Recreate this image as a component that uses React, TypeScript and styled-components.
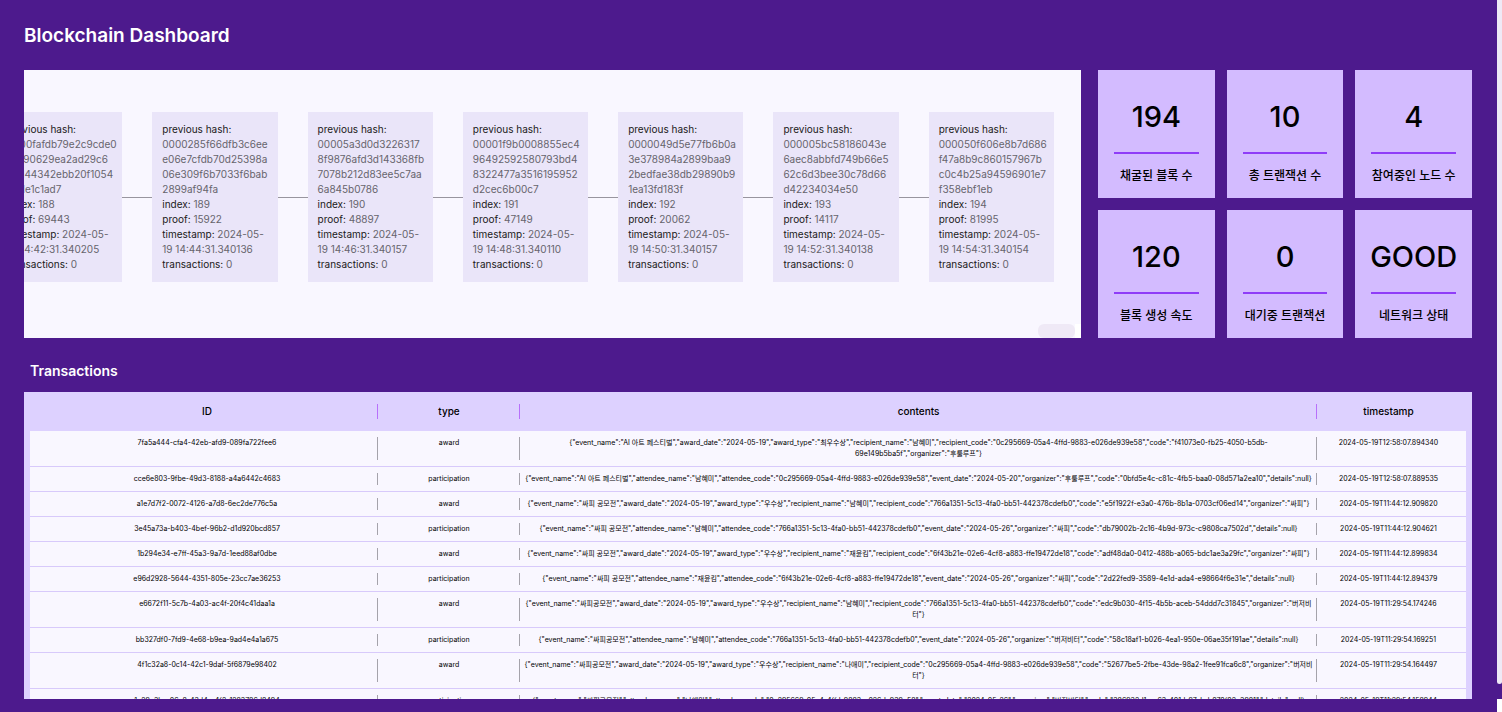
import React from "react";
import styled, { createGlobalStyle } from "styled-components";

const color = {
  page: "#4d1a8d",
  panel: "#f9f7ff",
  block: "#eae5f9",
  stat: "#d3bbff",
  accent: "#8f3cf8",
  head: "#ddd1ff",
  headLine: "#b870fb",
  rowLine: "#d8cafb",
  cellLine: "#a5a3ab",
  thumb: "#efe9f6",
};

const GlobalStyle = createGlobalStyle`
  *, *::before, *::after { box-sizing: border-box; }
  body {
    margin: 0;
    background: ${color.page};
    font-family: Inter, "Noto Sans CJK KR", sans-serif;
    color: #000;
  }
  h1, h2, p, dl, dt, dd { margin: 0; }
`;

const Page = styled.div`
  display: flex;
  height: 100vh;
  overflow: hidden;
`;

const Main = styled.main`
  flex: 1;
  min-width: 0;
  display: flex;
  flex-direction: column;
  padding: 20px 25px 13px 24px;
`;

const ScrollRail = styled.div`
  width: 5px;
  display: flex;
  flex-direction: column;
  justify-content: space-between;
`;

const RailThumb = styled.div`
  height: 96%;
  background: ${color.thumb};
  border-radius: 0 0 3px 3px;
`;

const RailEnd = styled.div`
  height: 13px;
  background: #fff;
`;

const Title = styled.h1`
  font-size: 19px;
  line-height: 32px;
  font-weight: 600;
  color: #fff;
`;

const Overview = styled.section`
  display: flex;
  gap: 17px;
  height: 268px;
  flex-shrink: 0;
  margin-top: 18px;
`;

const ChainPanel = styled.div`
  flex: 1;
  min-width: 0;
  display: flex;
  flex-direction: column;
  justify-content: space-between;
  overflow: hidden;
  background: ${color.panel};
`;

const Chain = styled.div`
  display: flex;
  justify-content: flex-end;
  align-items: center;
  padding: 42px 27px 0 0;
`;

const ChainTrack = styled.div`
  flex: 0 0 calc(100% + 27px);
  min-width: 0;
  display: flex;
  align-items: center;
`;

const Block = styled.dl`
  flex: 1 1 0;
  min-width: 0;
  padding: 10px;
  background: ${color.block};
  font-size: 10px;
  line-height: 15px;
  white-space: nowrap;
`;

const Field = styled.div``;

const Name = styled.dt`
  display: inline;
  color: #1b1a20;
`;

const Value = styled.dd`
  display: inline;
  color: #66646c;
  white-space: pre;
`;

const Link = styled.div`
  flex: 0 0 30px;
  height: 1px;
  background: #98959f;
`;

const ChainScroll = styled.div`
  display: flex;
  justify-content: flex-end;
  height: 14px;
`;

const ChainThumb = styled.div`
  width: 37px;
  background: ${color.thumb};
  border-radius: 6px;
`;

const ChainCorner = styled.div`
  width: 6px;
  background: #fff;
`;

const Stats = styled.div`
  flex: 0 0 374px;
  display: grid;
  grid-template-columns: repeat(3, minmax(0, 1fr));
  grid-template-rows: repeat(2, minmax(0, 1fr));
  gap: 12px;
`;

const Stat = styled.div`
  display: flex;
  flex-direction: column;
  align-items: center;
  padding: 12px 16px;
  background: ${color.stat};
`;

const StatValue = styled.p`
  width: 100%;
  height: 72px;
  display: flex;
  justify-content: center;
  font-size: 29px;
  line-height: 70px;
  font-weight: 500;
  border-bottom: 2px solid ${color.accent};
`;

const StatLabel = styled.p`
  font-size: 12px;
  line-height: 18px;
  font-weight: 500;
  margin-top: 13px;
  white-space: nowrap;
`;

const SubTitle = styled.h2`
  margin: 20px 0 8px 6px;
  font-size: 14px;
  line-height: 26px;
  font-weight: 600;
  color: #fff;
`;

const TablePanel = styled.section`
  flex: 1;
  min-height: 0;
  overflow: hidden;
  padding: 0 6px;
  background: ${color.head};
`;

const Table = styled.table`
  width: 100%;
  table-layout: fixed;
  border-collapse: separate;
  border-spacing: 0;
`;

const Col = styled.col<{ $width?: number }>`
  width: ${(p) => (p.$width ? `${p.$width}px` : "auto")};
`;

const divider = (tone: string, inset: number) => `
  &:not(:last-child) {
    background-image: linear-gradient(${tone}, ${tone});
    background-repeat: no-repeat;
    background-position: right center;
    background-size: 1px calc(100% - ${inset}px);
  }
  &:first-child { padding-left: 6px; }
  &:last-child { padding-right: 6px; }
`;

const Th = styled.th`
  height: 39px;
  padding: 0;
  font-size: 10px;
  line-height: 15px;
  font-weight: 500;
  ${divider(color.headLine, 24)}
`;

const Td = styled.td`
  padding: 6px 0 7px;
  background-color: ${color.panel};
  border-bottom: 1px solid ${color.rowLine};
  font-size: 7px;
  line-height: 11px;
  text-align: center;
  vertical-align: top;
  white-space: pre;
  ${divider(color.cellLine, 12)}
`;

type BlockData = {
  hash: string[];
  index: number;
  proof: number;
  time: string;
};

const blocks: BlockData[] = [
  { hash: ["0000fafdb79e2c9cde0", "3d190629ea2ad29c6", "b7d44342ebb20f1054", "a6de1c1ad7"], index: 188, proof: 69443, time: "14:42:31.340205" },
  { hash: ["0000285f66dfb3c6ee", "e06e7cfdb70d25398a", "06e309f6b7033f6bab", "2899af94fa"], index: 189, proof: 15922, time: "14:44:31.340136" },
  { hash: ["00005a3d0d3226317", "8f9876afd3d143368fb", "7078b212d83ee5c7aa", "6a845b0786"], index: 190, proof: 48897, time: "14:46:31.340157" },
  { hash: ["00001f9b0008855ec4", "96492592580793bd4", "8322477a3516195952", "d2cec6b00c7"], index: 191, proof: 47149, time: "14:48:31.340110" },
  { hash: ["0000049d5e77fb6b0a", "3e378984a2899baa9", "2bedfae38db29890b9", "1ea13fd183f"], index: 192, proof: 20062, time: "14:50:31.340157" },
  { hash: ["000005bc58186043e", "6aec8abbfd749b66e5", "62c6d3bee30c78d66", "d42234034e50"], index: 193, proof: 14117, time: "14:52:31.340138" },
  { hash: ["000050f606e8b7d686", "f47a8b9c860157967b", "c0c4b25a94596901e7", "f358ebf1eb"], index: 194, proof: 81995, time: "14:54:31.340154" },
];

const stats = [
  { value: "194", label: "채굴된 블록 수" },
  { value: "10", label: "총 트랜잭션 수" },
  { value: "4", label: "참여중인 노드 수" },
  { value: "120", label: "블록 생성 속도" },
  { value: "0", label: "대기중 트랜잭션" },
  { value: "GOOD", label: "네트워크 상태" },
];

const transactions = [
  {
    id: "7fa5a444-cfa4-42eb-afd9-089fa722fee6",
    type: "award",
    contents: '{"event_name":"AI 아트 페스티벌","award_date":"2024-05-19","award_type":"최우수상","recipient_name":"남혜미","recipient_code":"0c295669-05a4-4ffd-9883-e026de939e58","code":"f41073e0-fb25-4050-b5db-\n69e149b5ba5f","organizer":"후룰루프"}',
    timestamp: "2024-05-19T12:58:07.894340",
  },
  {
    id: "cce6e803-9fbe-49d3-8188-a4a6442c4683",
    type: "participation",
    contents: '{"event_name":"AI 아트 페스티벌","attendee_name":"남혜미","attendee_code":"0c295669-05a4-4ffd-9883-e026de939e58","event_date":"2024-05-20","organizer":"후룰루프","code":"0bfd5e4c-c81c-4fb5-baa0-08d571a2ea10","details":null}',
    timestamp: "2024-05-19T12:58:07.889535",
  },
  {
    id: "a1e7d7f2-0072-4126-a7d8-6ec2de776c5a",
    type: "award",
    contents: '{"event_name":"싸피 공모전","award_date":"2024-05-19","award_type":"우수상","recipient_name":"남혜미","recipient_code":"766a1351-5c13-4fa0-bb51-442378cdefb0","code":"e5f1922f-e3a0-476b-8b1a-0703cf06ed14","organizer":"싸피"}',
    timestamp: "2024-05-19T11:44:12.909820",
  },
  {
    id: "3e45a73a-b403-4bef-96b2-d1d920bcd857",
    type: "participation",
    contents: '{"event_name":"싸피 공모전","attendee_name":"남혜미","attendee_code":"766a1351-5c13-4fa0-bb51-442378cdefb0","event_date":"2024-05-26","organizer":"싸피","code":"db79002b-2c16-4b9d-973c-c9808ca7502d","details":null}',
    timestamp: "2024-05-19T11:44:12.904621",
  },
  {
    id: "1b294e34-e7ff-45a3-9a7d-1eed88af0dbe",
    type: "award",
    contents: '{"event_name":"싸피 공모전","award_date":"2024-05-19","award_type":"우수상","recipient_name":"재윤킴","recipient_code":"6f43b21e-02e6-4cf8-a883-ffe19472de18","code":"adf48da0-0412-488b-a065-bdc1ae3a29fc","organizer":"싸피"}',
    timestamp: "2024-05-19T11:44:12.899834",
  },
  {
    id: "e96d2928-5644-4351-805e-23cc7ae36253",
    type: "participation",
    contents: '{"event_name":"싸피 공모전","attendee_name":"재윤킴","attendee_code":"6f43b21e-02e6-4cf8-a883-ffe19472de18","event_date":"2024-05-26","organizer":"싸피","code":"2d22fed9-3589-4e1d-ada4-e98664f6e31e","details":null}',
    timestamp: "2024-05-19T11:44:12.894379",
  },
  {
    id: "e6672f11-5c7b-4a03-ac4f-20f4c41daa1a",
    type: "award",
    contents: '{"event_name":"싸피공모전","award_date":"2024-05-19","award_type":"우수상","recipient_name":"남혜미","recipient_code":"766a1351-5c13-4fa0-bb51-442378cdefb0","code":"edc9b030-4f15-4b5b-aceb-54ddd7c31845","organizer":"버저비\n터"}',
    timestamp: "2024-05-19T11:29:54.174246",
  },
  {
    id: "bb327df0-7fd9-4e68-b9ea-9ad4e4a1a675",
    type: "participation",
    contents: '{"event_name":"싸피공모전","attendee_name":"남혜미","attendee_code":"766a1351-5c13-4fa0-bb51-442378cdefb0","event_date":"2024-05-26","organizer":"버저비터","code":"58c18af1-b026-4ea1-950e-06ae35f191ae","details":null}',
    timestamp: "2024-05-19T11:29:54.169251",
  },
  {
    id: "4f1c32a8-0c14-42c1-9daf-5f6879e98402",
    type: "award",
    contents: '{"event_name":"싸피공모전","award_date":"2024-05-19","award_type":"우수상","recipient_name":"나애미","recipient_code":"0c295669-05a4-4ffd-9883-e026de939e58","code":"52677be5-2fbe-43de-98a2-1fee91fca6c8","organizer":"버저비\n터"}',
    timestamp: "2024-05-19T11:29:54.164497",
  },
  {
    id: "1e29e3bc-06c8-43d4-a4f2-1283786d8494",
    type: "participation",
    contents: '{"event_name":"싸피공모전","attendee_name":"나애미","attendee_code":"0c295669-05a4-4ffd-9883-e026de939e58","event_date":"2024-05-26","organizer":"버저비터","code":"386932d1-aa63-401d-97ab-b070f02e3981","details":null}',
    timestamp: "2024-05-19T11:29:54.158944",
  },
];

export default function App() {
  return (
    <>
      <GlobalStyle />
      <Page>
        <Main>
          <Title>Blockchain Dashboard</Title>
          <Overview>
            <ChainPanel>
              <Chain>
                <ChainTrack>
                  {blocks.map((b, i) => (
                    <React.Fragment key={b.index}>
                      {i > 0 && <Link />}
                      <Block>
                        <Field>
                          <Name>previous hash:</Name>
                          <Value>{"\n" + b.hash.join("\n")}</Value>
                        </Field>
                        <Field>
                          <Name>index: </Name>
                          <Value>{b.index}</Value>
                        </Field>
                        <Field>
                          <Name>proof: </Name>
                          <Value>{b.proof}</Value>
                        </Field>
                        <Field>
                          <Name>timestamp: </Name>
                          <Value>{`2024-05-\n19 ${b.time}`}</Value>
                        </Field>
                        <Field>
                          <Name>transactions: </Name>
                          <Value>0</Value>
                        </Field>
                      </Block>
                    </React.Fragment>
                  ))}
                </ChainTrack>
              </Chain>
              <ChainScroll>
                <ChainThumb />
                <ChainCorner />
              </ChainScroll>
            </ChainPanel>
            <Stats>
              {stats.map((s) => (
                <Stat key={s.label}>
                  <StatValue>{s.value}</StatValue>
                  <StatLabel>{s.label}</StatLabel>
                </Stat>
              ))}
            </Stats>
          </Overview>
          <SubTitle>Transactions</SubTitle>
          <TablePanel>
            <Table>
              <colgroup>
                <Col $width={348} />
                <Col $width={142} />
                <Col />
                <Col $width={149} />
              </colgroup>
              <thead>
                <tr>
                  <Th scope="col">ID</Th>
                  <Th scope="col">type</Th>
                  <Th scope="col">contents</Th>
                  <Th scope="col">timestamp</Th>
                </tr>
              </thead>
              <tbody>
                {transactions.map((t) => (
                  <tr key={t.id}>
                    <Td>{t.id}</Td>
                    <Td>{t.type}</Td>
                    <Td>{t.contents}</Td>
                    <Td>{t.timestamp}</Td>
                  </tr>
                ))}
              </tbody>
            </Table>
          </TablePanel>
        </Main>
        <ScrollRail>
          <RailThumb />
          <RailEnd />
        </ScrollRail>
      </Page>
    </>
  );
}
